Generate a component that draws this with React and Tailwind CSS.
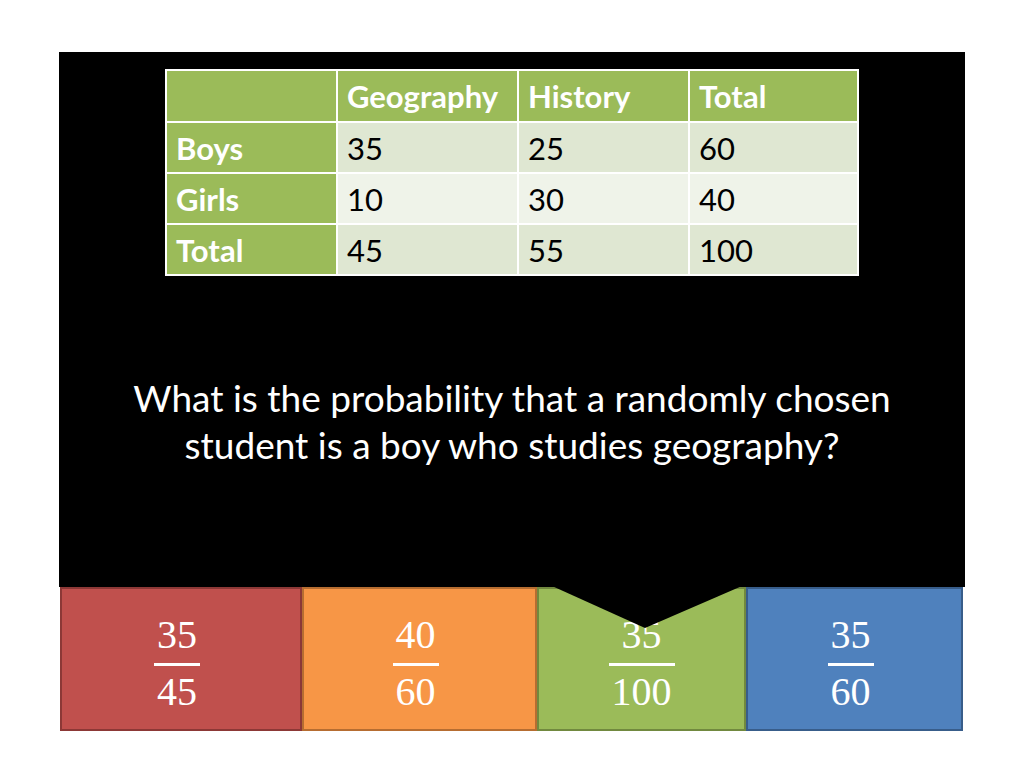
const rows = [
  { label: "Boys", vals: ["35", "25", "60"], bg: "bg-[#dfe7d2]" },
  { label: "Girls", vals: ["10", "30", "40"], bg: "bg-[#eff3e9]" },
  { label: "Total", vals: ["45", "55", "100"], bg: "bg-[#dfe7d2]" },
];

const answers = [
  { num: "35", den: "45", cls: "w-[242px] bg-[#c0504d] border-[#8c3836] pr-[8px]" },
  { num: "40", den: "60", cls: "w-[235px] bg-[#f79646] border-[#b66d31] pr-[8px]" },
  { num: "35", den: "100", cls: "w-[209px] bg-[#9bbb59] border-[#71893f]" },
  { num: "35", den: "60", cls: "w-[217px] bg-[#4f81bd] border-[#385d8a] pr-[8px]" },
];

function Fraction({ num, den }) {
  return (
    <div className="inline-flex flex-col items-center text-white font-['Liberation_Serif',serif] text-[40px] leading-none">
      <span className="px-[3px]">{num}</span>
      <span className="self-stretch h-[3px] bg-white mt-[8px] mb-[6px]" />
      <span className="px-[3px]">{den}</span>
    </div>
  );
}

export default function App() {
  return (
    <div className="relative w-[1024px] h-[768px] bg-white pt-[52px] pl-[59px] font-['Lato',sans-serif]">
      <div className="w-[906px] h-[535px] bg-black pt-[17px] pl-[106px]">
        <table className="w-[694px] border-collapse text-[31px]">
          <thead>
            <tr className="h-[52px] bg-[#9bbb59] text-white font-bold">
              <th className="w-[171px] border-2 border-white" />
              <th className="w-[181px] border-2 border-white text-left pl-[9px] font-bold">Geography</th>
              <th className="w-[171px] border-2 border-white text-left pl-[9px] font-bold">History</th>
              <th className="border-2 border-white text-left pl-[9px] font-bold">Total</th>
            </tr>
          </thead>
          <tbody>
            {rows.map((r) => (
              <tr key={r.label} className="h-[51px]">
                <td className="bg-[#9bbb59] text-white font-bold pl-[9px] border-2 border-white leading-[46px]">{r.label}</td>
                {r.vals.map((v, i) => (
                  <td key={i} className={`${r.bg} text-black pl-[9px] border-2 border-white leading-[46px]`}>{v}</td>
                ))}
              </tr>
            ))}
          </tbody>
        </table>
        <p className="-ml-[106px] mt-[98px] text-center text-white text-[37px] leading-[47px]">
          What is the probability that a randomly chosen
          <br />
          student is a boy who studies geography?
        </p>
      </div>
      <div className="flex h-[144px] ml-[1px]">
        {answers.map((a, i) => (
          <div key={i} className={`${a.cls} border-2 flex items-start justify-center pt-[26px]`}>
            <Fraction num={a.num} den={a.den} />
          </div>
        ))}
      </div>
      <svg className="absolute left-[552px] top-[586px]" width="190" height="43" viewBox="0 0 190 43">
        <polygon points="0,0 93,42 190,0" fill="black" />
      </svg>
    </div>
  );
}
